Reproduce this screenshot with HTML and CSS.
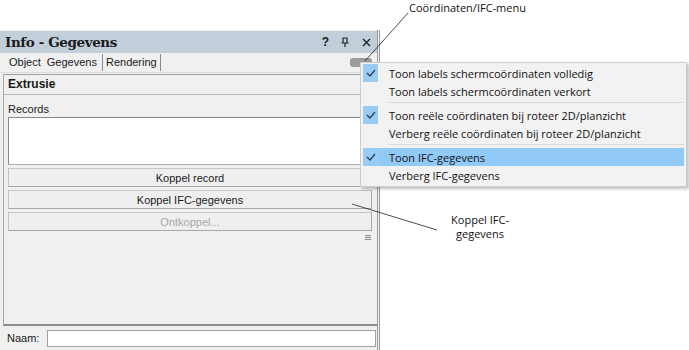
FILE: index.html
```html
<!DOCTYPE html>
<html lang="nl">
  <head>
    <meta charset="UTF-8" />
    <title>Info - Gegevens</title>
    <link rel="stylesheet" href="styles.css">
  </head>
  <body>
    <div class="page">
      <div class="panel">
        <div class="titlebar">
          <span class="title">Info - Gegevens</span>
          <span class="tools">
            <span class="tool">?</span>
            <svg class="tool-pin" width="9" height="10" viewBox="0 0 9 10">
              <path d="M2 1h4v5M2 1v5M0.5 6h7M4 6v4" fill="none" stroke="#222" stroke-width="1.2" />
            </svg>
            <svg class="tool-x" width="9" height="9" viewBox="0 0 9 9">
              <path d="M1 1l7 7M8 1l-7 7" stroke="#222" stroke-width="1.4" />
            </svg>
          </span>
        </div>

        <div class="tabs">
          <span class="tab">Object</span>
          <span class="tab">Gegevens</span>
          <span class="tab tab-boxed">Rendering</span>
          <span class="menu-toggle"></span>
        </div>

        <div class="content">
          <div class="kind">Extrusie</div>
          <div class="section">
            <div class="label">Records</div>
            <div class="listbox"></div>
            <div class="buttons">
              <button class="btn">Koppel record</button>
              <button class="btn">Koppel IFC-gegevens</button>
              <button class="btn" disabled>Ontkoppel...</button>
            </div>
            <div class="grip">
              <span></span><span></span><span></span>
            </div>
          </div>
        </div>

        <div class="namerow">
          <span>Naam:</span>
          <div class="namefield"></div>
        </div>
      </div>
    </div>

    <!-- context menu over the panel -->
    <div class="menu">
      <div class="item checked"><span class="check"><svg width="10" height="8" viewBox="0 0 10 8"><path d="M1 4l3 3 5-6" fill="none" stroke="#2c3e50" stroke-width="1.3" /></svg></span>Toon labels schermcoördinaten volledig</div>
      <div class="item"><span class="check"></span>Toon labels schermcoördinaten verkort</div>
      <div class="sep"></div>
      <div class="item checked"><span class="check"><svg width="10" height="8" viewBox="0 0 10 8"><path d="M1 4l3 3 5-6" fill="none" stroke="#2c3e50" stroke-width="1.3" /></svg></span>Toon reële coördinaten bij roteer 2D/planzicht</div>
      <div class="item"><span class="check"></span>Verberg reële coördinaten bij roteer 2D/planzicht</div>
      <div class="sep"></div>
      <div class="item checked active"><span class="check"><svg width="10" height="8" viewBox="0 0 10 8"><path d="M1 4l3 3 5-6" fill="none" stroke="#2c3e50" stroke-width="1.3" /></svg></span>Toon IFC-gegevens</div>
      <div class="item"><span class="check"></span>Verberg IFC-gegevens</div>
    </div>

    <!-- callouts -->
    <div class="callout callout-menu">Coördinaten/IFC-menu</div>
    <div class="callout callout-ifc">
      <div>Koppel IFC-</div>
      <div>gegevens</div>
    </div>
    <svg class="leaders" width="689" height="350">
      <line x1="408" y1="13" x2="365" y2="61" stroke="#222" stroke-width="0.8" />
      <line x1="352" y1="204" x2="437" y2="230" stroke="#222" stroke-width="0.8" />
    </svg>
  </body>
</html>
```

FILE: styles.css
```css
body {
  margin: 0;
  width: 689px;
  height: 350px;
  overflow: hidden;
  background: white;
  position: relative;
  font-family: "Liberation Sans", Arial, sans-serif;
  font-size: 11px;
  color: #1a1a1a;
}
.page {
  padding-top: 30px;
}
.panel {
  width: 377px;
  height: 320px;
  border-right: 3px double #9a9a9a;
  background: #f0f0f0;
  display: flex;
  flex-direction: column;
}
.titlebar {
  height: 22px;
  margin-top: 1px;
  background: #c2ceda;
  display: flex;
  align-items: center;
  justify-content: space-between;
  padding: 0 6px 0 5px;
}
.title {
  font-family: "DejaVu Serif", "Liberation Serif", serif;
  font-weight: bold;
  font-size: 13.5px;
  letter-spacing: -0.4px;
  color: #1b1b1b;
}
.tools {
  display: flex;
  align-items: center;
  gap: 12px;
}
.tool {
  font-weight: bold;
  font-size: 12px;
}
.tabs {
  height: 19px;
  display: flex;
  align-items: center;
  padding-left: 6px;
  border-bottom: 1px solid #dcdcdc;
  position: relative;
}
.tab {
  padding: 0 3px;
  line-height: 17px;
}
.tab-boxed {
  border-left: 1px solid #8a8a8a;
  border-right: 1px solid #8a8a8a;
  margin-left: 2px;
  padding: 0 3px;
}
.menu-toggle {
  position: absolute;
  left: 350px;
  top: 5px;
  width: 22px;
  height: 9px;
  border-radius: 3px;
  background: #9c9c9c;
}
.content {
  flex: 1;
  margin: 1px 0 0 3px;
  border-left: 1px solid #a8a8a8;
  border-bottom: 2px solid #8c8c8c;
}
.kind {
  height: 19px;
  line-height: 19px;
  padding-left: 4px;
  font-weight: bold;
  font-size: 12px;
  border-top: 1px solid #a0a0a0;
  border-bottom: 1px solid #b8b8b8;
}
.section {
  padding: 7px 5px 0 4px;
}
.label {
  line-height: 14px;
}
.listbox {
  margin-top: 1px;
  height: 46px;
  background: white;
  border: 1px solid #b0b0b0;
  border-left-color: #888;
  border-top-color: #888;
}
.buttons {
  margin-top: 3px;
  display: flex;
  flex-direction: column;
  gap: 3px;
}
.btn {
  height: 19px;
  padding: 0;
  font-family: "Liberation Sans", Arial, sans-serif;
  font-size: 11px;
  color: #1a1a1a;
  background: #efefef;
  border: 1px solid #c4c4c4;
  border-right-color: #a8a8a8;
  border-bottom-color: #a8a8a8;
}
.btn:disabled {
  color: #a8a8a8;
}
.grip {
  display: flex;
  flex-direction: column;
  align-items: flex-end;
  gap: 1px;
  padding: 4px 1px 0 0;
}
.grip span {
  width: 6px;
  height: 1px;
  background: #8a8a8a;
}
.namerow {
  height: 24px;
  display: flex;
  align-items: center;
  padding-left: 7px;
  gap: 8px;
}
.namefield {
  width: 327px;
  height: 15px;
  background: white;
  border: 1px solid #a0a0a0;
}
.menu {
  position: absolute;
  left: 360px;
  top: 62px;
  width: 323px;
  padding: 1px 0 2px 2px;
  background: #f2f2f2;
  border: 1px solid #cccccc;
  box-shadow: 2px 2px 3px rgba(0, 0, 0, 0.25);
  font-family: "Open Sans", "Noto Sans", sans-serif;
  font-size: 11px;
  color: #111;
}
.item {
  height: 18px;
  display: flex;
  align-items: center;
  margin-right: 2px;
}
.check {
  width: 15px;
  height: 18px;
  margin-right: 11px;
  display: flex;
  align-items: center;
  justify-content: center;
}
.checked .check {
  background: #99ccf5;
}
.active {
  background: #91c9f7;
}
.sep {
  height: 1px;
  margin: 2px 2px 3px 26px;
  background: #d8d8d8;
}
.callout {
  position: absolute;
  font-family: "Open Sans", "Noto Sans", sans-serif;
  font-size: 11px;
  color: #111;
  line-height: 15px;
}
.callout-menu {
  left: 409px;
  top: 0;
}
.callout-ifc {
  left: 438px;
  top: 213px;
  width: 84px;
  display: flex;
  flex-direction: column;
  align-items: center;
  line-height: 14px;
}
.leaders {
  position: absolute;
  left: 0;
  top: 0;
}
```
